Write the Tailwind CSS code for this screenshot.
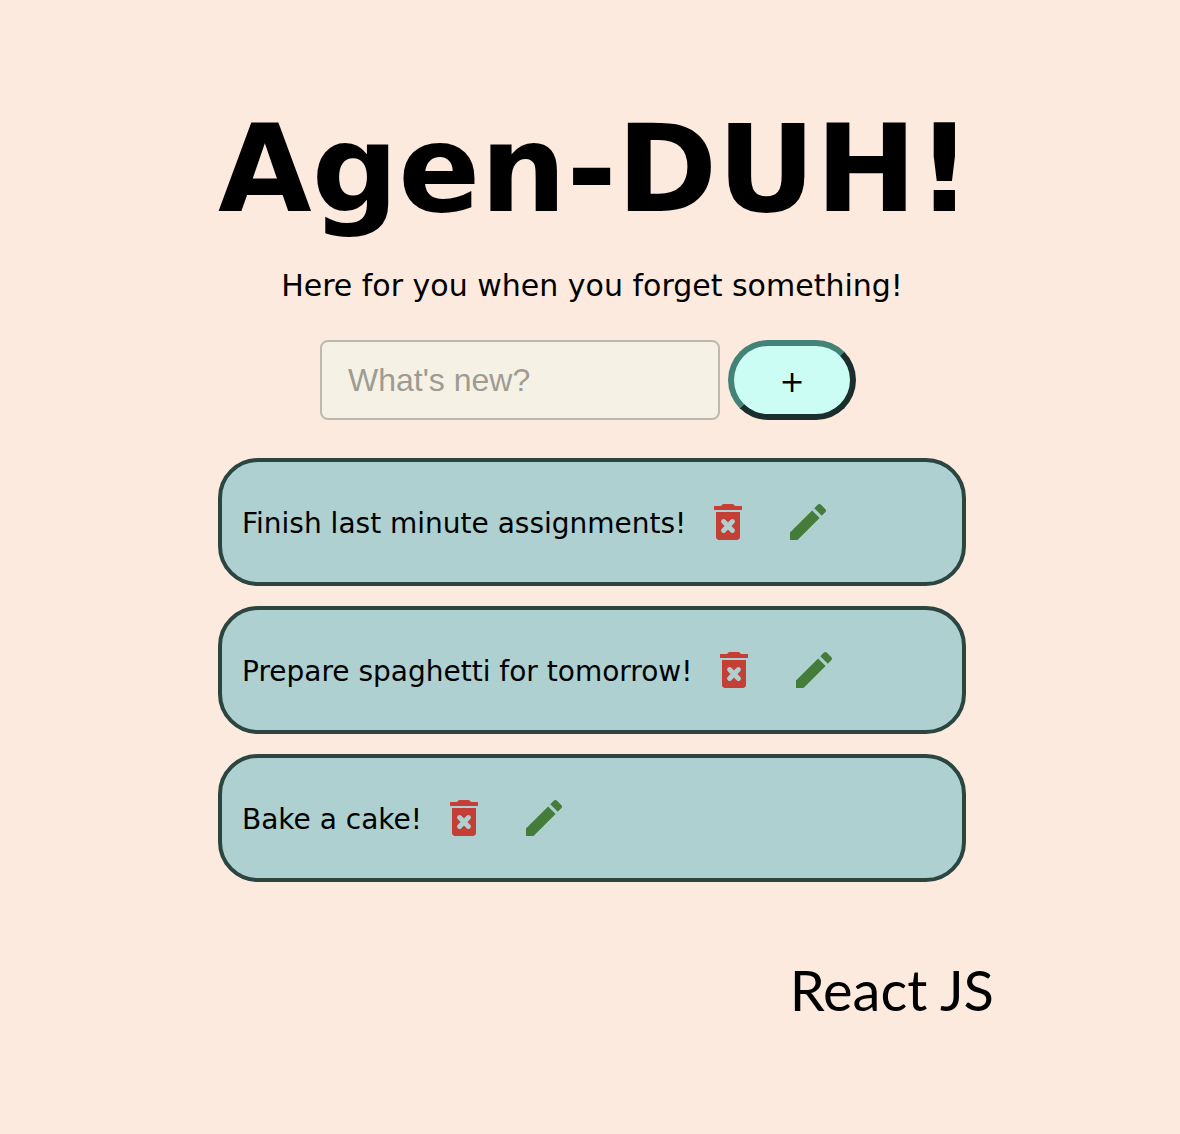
<!DOCTYPE html>
<html lang="en">
<head>
<meta charset="utf-8">
<meta name="viewport" content="width=device-width, initial-scale=1">
<title>Agen-DUH!</title>
<script src="https://cdn.jsdelivr.net/npm/@tailwindcss/browser@4"></script>
</head>
<body class="min-h-screen bg-[#fceade] font-['Verdana','DejaVu_Sans',sans-serif] text-black">
<svg class="hidden" aria-hidden="true">
  <symbol id="trash" viewBox="0 0 24 24"><path d="M6 19.5c0 .8.7 1.5 1.5 1.5h9c.8 0 1.5-.7 1.5-1.5V7H6v12.5zM15.5 4l-1-1h-5l-1 1H5v2h14V4z"/><path d="M9.8 11.8l4.400 4.400M14.200 11.800l-4.400 4.400" fill="none" stroke="#aed0d0" stroke-width="2.500" stroke-linecap="round"/></symbol>
  <symbol id="pencil" viewBox="0 0 24 24"><path d="M3 17.25V21h3.75L17.81 9.94l-3.75-3.75L3 17.25zM20.71 7.04c.39-.39.39-1.02 0-1.41l-2.34-2.34c-.39-.39-1.02-.39-1.41 0l-1.83 1.83 3.75 3.75 1.83-1.83z"/></symbol>
</svg>
<main class="mx-auto flex max-w-[816px] flex-col pt-24 pr-8 pl-9">
  <header class="text-center">
    <h1 class="text-[121px] leading-[148px] font-bold whitespace-nowrap">Agen-DUH!</h1>
    <p class="mt-5 text-[30px] leading-[44px]">Here for you when you forget something!</p>
  </header>
  <form class="mt-8 flex justify-center gap-2 pr-2" onsubmit="return false">
    <input type="text" aria-label="New item" placeholder="What's new?" class="h-20 w-[400px] rounded-lg border-2 border-[#bbb9b0] bg-[#f5f2e5] px-[26px] font-['Liberation_Sans',sans-serif] text-[32px] placeholder:text-[#9e9b93]">
    <button type="submit" aria-label="Add" class="h-20 w-32 rounded-full border-6 border-t-[#428277] border-r-[#1a2e2b] border-b-[#1a2e2b] border-l-[#428277] bg-[#cbfdf4] pt-1 text-[30px] leading-8">+</button>
  </form>
  <ul class="mt-[38px] flex flex-col gap-5">
    <li class="flex h-32 items-center rounded-[40px] border-4 border-[#2b4540] bg-[#aed0d0] px-5">
      <span class="pt-1 text-[28px]">Finish last minute assignments!</span>
      <button type="button" aria-label="Delete" class="ml-[18px]"><svg class="size-12 fill-[#c43f36]"><use href="#trash"/></svg></button>
      <button type="button" aria-label="Edit" class="ml-8"><svg class="size-12 fill-[#457c3a]"><use href="#pencil"/></svg></button>
    </li>
    <li class="flex h-32 items-center rounded-[40px] border-4 border-[#2b4540] bg-[#aed0d0] px-5">
      <span class="pt-1 text-[28px]">Prepare spaghetti for tomorrow!</span>
      <button type="button" aria-label="Delete" class="ml-[18px]"><svg class="size-12 fill-[#c43f36]"><use href="#trash"/></svg></button>
      <button type="button" aria-label="Edit" class="ml-8"><svg class="size-12 fill-[#457c3a]"><use href="#pencil"/></svg></button>
    </li>
    <li class="flex h-32 items-center rounded-[40px] border-4 border-[#2b4540] bg-[#aed0d0] px-5">
      <span class="pt-1 text-[28px]">Bake a cake!</span>
      <button type="button" aria-label="Delete" class="ml-[18px]"><svg class="size-12 fill-[#c43f36]"><use href="#trash"/></svg></button>
      <button type="button" aria-label="Edit" class="ml-8"><svg class="size-12 fill-[#457c3a]"><use href="#pencil"/></svg></button>
    </li>
  </ul>
  <footer class="mt-[76px] -mr-8 pr-1 text-right font-['Lato',sans-serif] text-[56px] leading-[64px]">React JS</footer>
</main>
</body>
</html>
